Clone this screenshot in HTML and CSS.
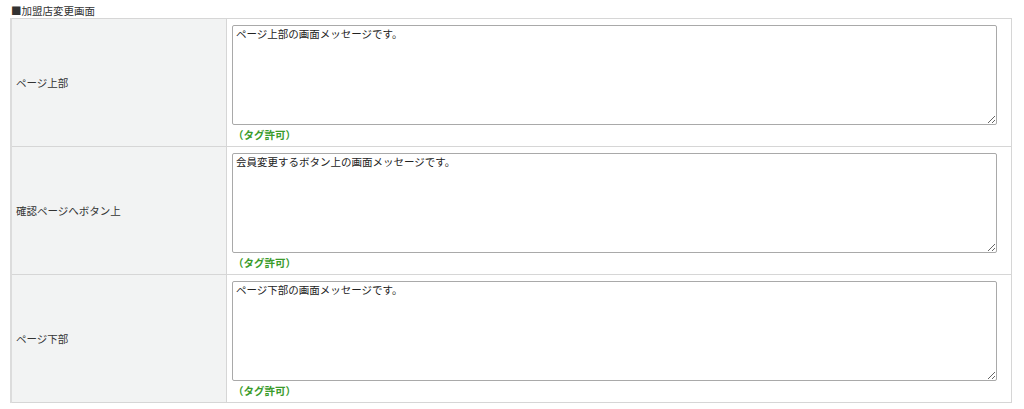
FILE: index.html
```html
<!DOCTYPE html>
<html lang="ja">
<head>
<meta charset="utf-8">
<link rel="stylesheet" href="styles.css">
</head>
<body>
<div class="page">
  <h2 class="title">■加盟店変更画面</h2>
  <table class="form-table">
    <tr>
      <th class="label">ページ上部</th>
      <td class="value">
        <textarea class="msg">ページ上部の画面メッセージです。</textarea>
        <div class="note">（タグ許可）</div>
      </td>
    </tr>
    <tr>
      <th class="label">確認ページへボタン上</th>
      <td class="value">
        <textarea class="msg">会員変更するボタン上の画面メッセージです。</textarea>
        <div class="note">（タグ許可）</div>
      </td>
    </tr>
    <tr>
      <th class="label">ページ下部</th>
      <td class="value">
        <textarea class="msg">ページ下部の画面メッセージです。</textarea>
        <div class="note">（タグ許可）</div>
      </td>
    </tr>
  </table>
</div>
</body>
</html>
```
FILE: styles.css
```css
html, body {
  margin: 0;
  padding: 0;
  background: #ffffff;
}
body {
  font-family: "Noto Sans CJK JP", "Noto Sans", sans-serif;
  font-size: 10.5px;
  color: #333333;
}
.page {
  padding: 4px 12px 0 10px;
}
.title {
  margin: 0 0 0 1px;
  font-size: 10.5px;
  font-weight: normal;
  line-height: 14px;
  height: 14px;
  color: #333333;
}
.form-table {
  border-collapse: collapse;
  width: 1002px;
}
.label {
  width: 217px;
  background: #f2f3f3;
  border: 1px solid #d6d6d6;
  border-left: 2px solid #dcdcdc;
  text-align: left;
  font-weight: normal;
  padding: 0 0 0 4px;
  vertical-align: middle;
  box-sizing: border-box;
}
.value {
  border: 1px solid #d6d6d6;
  padding: 6px 14px 4px 5px;
  vertical-align: top;
  background: #ffffff;
}
.msg {
  display: block;
  width: 765px;
  height: 100px;
  box-sizing: border-box;
  margin: 0;
  padding: 1px 3px;
  border: 1px solid #a9a9a9;
  border-radius: 2px;
  font-family: "Noto Sans CJK JP", "Noto Sans", sans-serif;
  font-size: 10.5px;
  line-height: 14px;
  color: #222222;
  background: #ffffff;
}
.note {
  margin-top: 2px;
  line-height: 15px;
  color: #3a9b2a;
  font-weight: bold;
  font-size: 10.5px;
  padding-left: 1px;
}
```
